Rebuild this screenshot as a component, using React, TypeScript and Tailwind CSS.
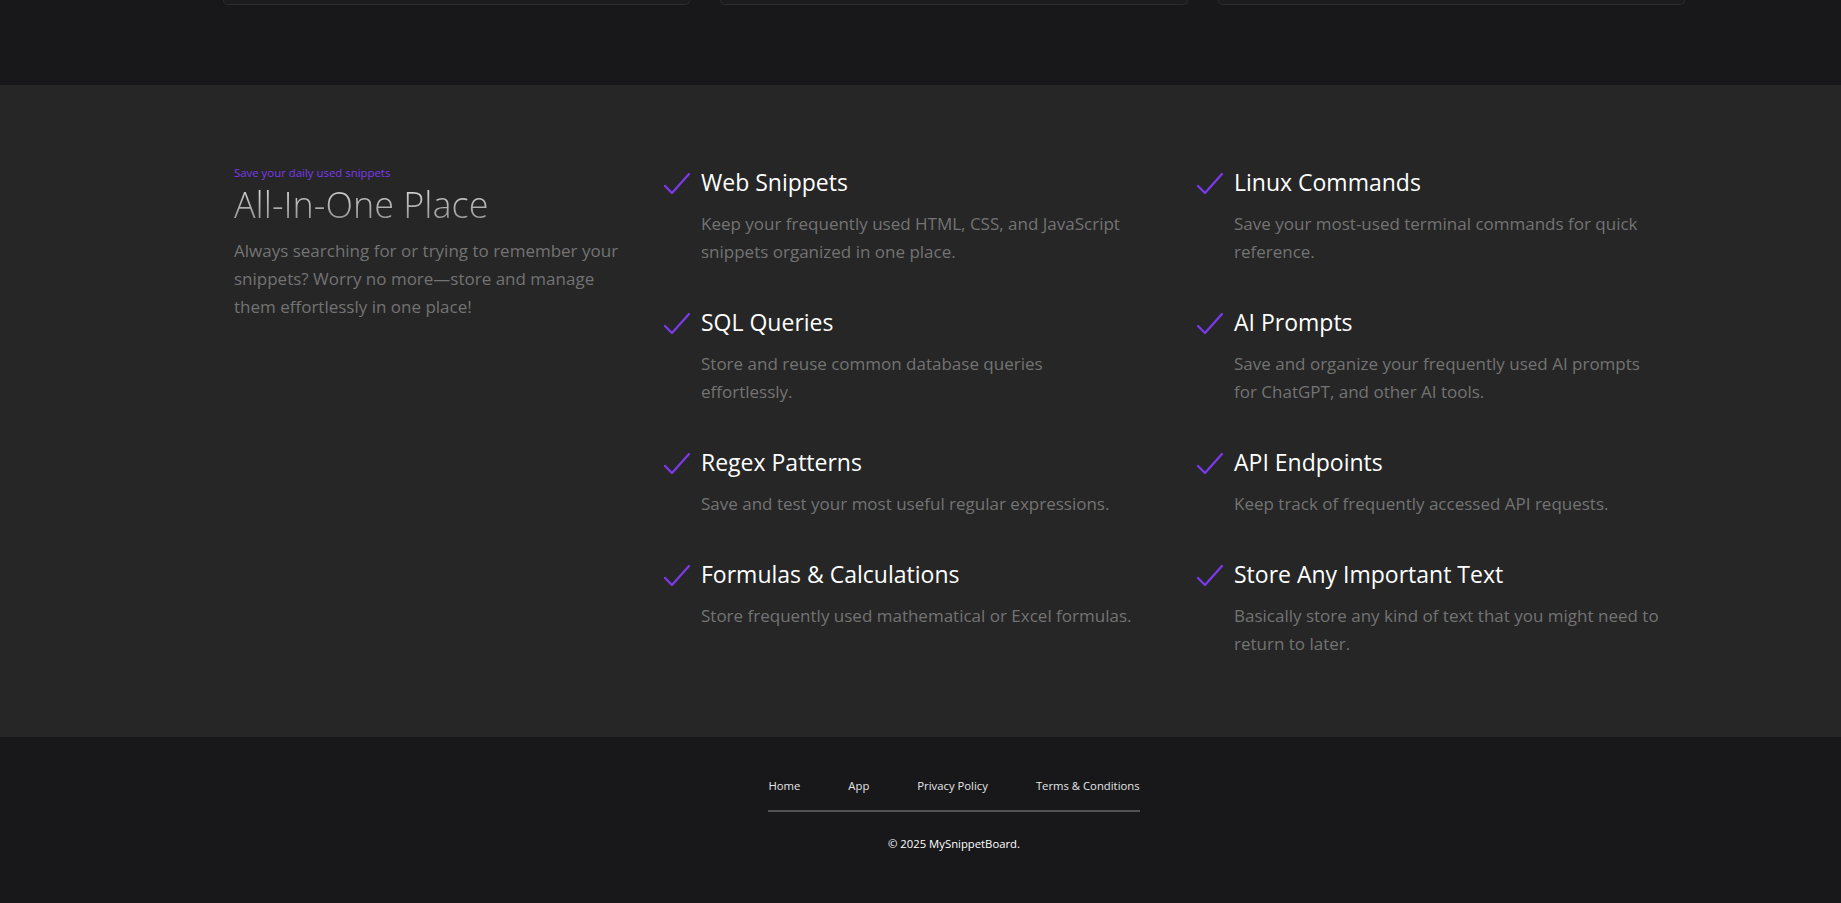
import React from "react";

const features = [
  {
    title: "Web Snippets",
    text: "Keep your frequently used HTML, CSS, and JavaScript snippets organized in one place.",
  },
  {
    title: "Linux Commands",
    text: "Save your most-used terminal commands for quick reference.",
  },
  {
    title: "SQL Queries",
    text: "Store and reuse common database queries effortlessly.",
  },
  {
    title: "AI Prompts",
    text: "Save and organize your frequently used AI prompts for ChatGPT, and other AI tools.",
  },
  {
    title: "Regex Patterns",
    text: "Save and test your most useful regular expressions.",
  },
  {
    title: "API Endpoints",
    text: "Keep track of frequently accessed API requests.",
  },
  {
    title: "Formulas & Calculations",
    text: "Store frequently used mathematical or Excel formulas.",
  },
  {
    title: "Store Any Important Text",
    text: "Basically store any kind of text that you might need to return to later.",
  },
];

const CheckMark = () => (
  <svg viewBox="0 0 28 23" className="w-[28px] h-[23px] shrink-0 mt-[6px]" fill="none" stroke="#7c3aed" strokeWidth={2.2} strokeLinecap="round" strokeLinejoin="round">
    <path d="M2 14 L9 21 L26 2" />
  </svg>
);

const App = () => {
  const links = ["Home", "App", "Privacy Policy", "Terms & Conditions"];
  return (
    <div className="min-h-screen bg-[#18181b] font-['Open_Sans','Noto_Sans',sans-serif]">
      {/* bottom of the cards from the section above */}
      <section className="pl-[67px] pb-20">
        <div className="w-[1463px] mx-auto grid grid-cols-3 gap-[30px]">
          <div className="h-[5px] rounded-b-lg border border-t-0 border-[#2c2c2f] bg-[#1c1c1f]"></div>
          <div className="h-[5px] rounded-b-lg border border-t-0 border-[#2c2c2f] bg-[#1c1c1f]"></div>
          <div className="h-[5px] rounded-b-lg border border-t-0 border-[#2c2c2f] bg-[#1c1c1f]"></div>
        </div>
      </section>

      {/* All-in-one feature list */}
      <section className="bg-[#262626] pt-20 pb-[79px]">
        <div className="pl-[234px] flex">
          <div className="w-[400px] mr-[29px]">
            <p className="text-[11.4px] leading-4 text-[#7c3aed]">Save your daily used snippets</p>
            <h2 className="mt-1 text-4xl leading-10 font-light bg-gradient-to-b from-[#dedede] to-[#8c8c8c] bg-clip-text text-transparent">
              All-In-One Place
            </h2>
            <p className="mt-[12px] text-[17px] leading-7 text-neutral-500">
              Always searching for or trying to remember your snippets? Worry no more—store and manage them effortlessly in one place!
            </p>
          </div>
          <div className="pt-px grid grid-cols-[472px_472px] gap-x-[61px] gap-y-10">
            {features.map((f, i) => (
              <div key={f.title} className="flex gap-[10px]">
                <CheckMark />
                <div className={i % 2 === 0 ? "w-[434px]" : "w-[429px]"}>
                  <h3 className="text-[23px] leading-8 text-white">{f.title}</h3>
                  <p className="mt-[12px] text-[17px] leading-7 text-neutral-500">{f.text}</p>
                </div>
              </div>
            ))}
          </div>
        </div>
      </section>

      <footer className="pl-[67px] pt-[41px] pb-[51px] flex flex-col items-center">
        <nav className="flex gap-12 pb-4 border-b-2 border-neutral-600">
          {links.map((l) => (
            <a key={l} href="#" className="text-[11.3px] leading-4 text-neutral-200">
              {l}
            </a>
          ))}
        </nav>
        <p className="mt-6 text-[11.3px] leading-4 text-white">© 2025 MySnippetBoard.</p>
      </footer>
    </div>
  );
};

export default App;
